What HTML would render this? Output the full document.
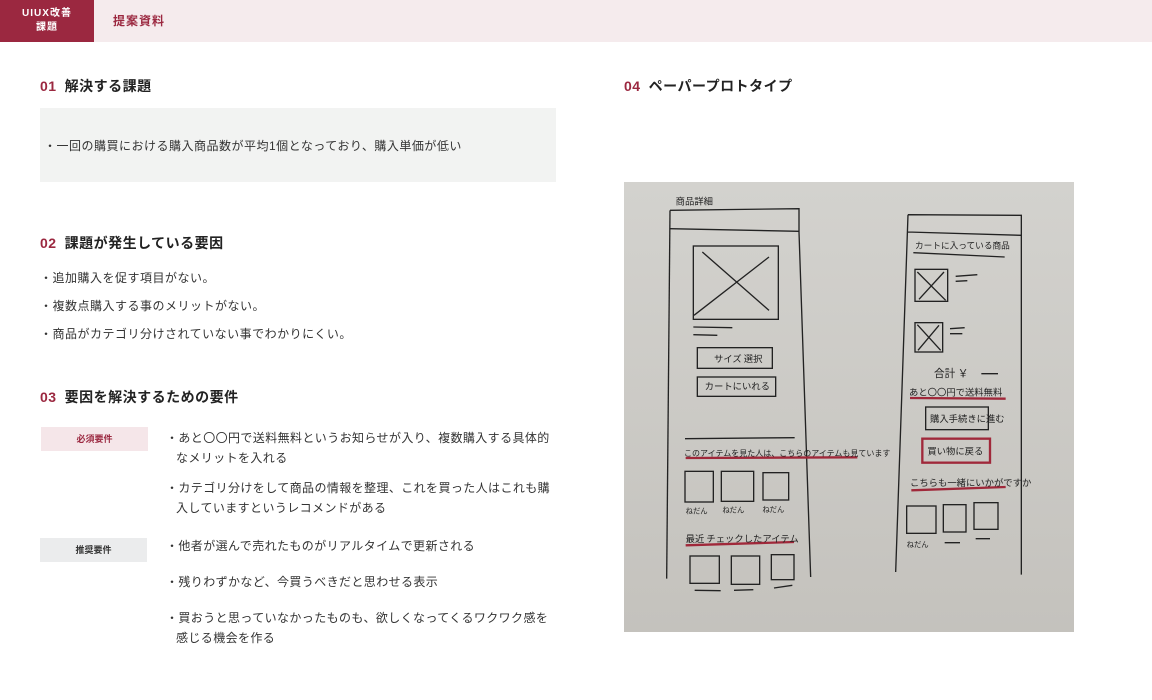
<!DOCTYPE html>
<html><head><meta charset="utf-8"><style>
*{margin:0;padding:0;box-sizing:border-box}
body{width:1152px;height:700px;background:#fff;font-family:"Liberation Sans","Noto Sans CJK JP",sans-serif;color:#333;position:relative;overflow:hidden}
.hdr{position:absolute;left:0;top:0;width:1152px;height:42px;background:#f5ebed}
.tag{position:absolute;left:0;top:0;width:94px;height:42px;background:#9b2840;color:#fff;font-size:10px;line-height:14px;text-align:center;padding-top:7px;letter-spacing:1px;font-weight:bold}
.ttl{position:absolute;left:113px;top:12px;font-size:12px;color:#9b2840;letter-spacing:1px;font-weight:bold}
h2{position:absolute;font-size:14px;font-weight:bold;color:#222;letter-spacing:.5px}
h2 b{color:#9b2840;margin-right:8px}
.p{position:absolute;font-size:12px;color:#333;letter-spacing:.5px}
.box{position:absolute;left:40px;top:108px;width:516px;height:74px;background:#f2f3f2}
.lab{position:absolute;font-size:9px;font-weight:bold;text-align:center;line-height:24px;height:24px}
.li{position:absolute;left:166px;font-size:12px;line-height:20px;color:#333;letter-spacing:.4px;width:385px;padding-left:10px;text-indent:-10px}
</style></head><body>
<div class="hdr"></div>
<div class="tag">UIUX改善<br>課題</div>
<div class="ttl">提案資料</div>

<h2 style="left:40px;top:76px"><b>01</b>解決する課題</h2>
<div class="box"></div>
<div class="p" style="left:44px;top:137px">・一回の購買における購入商品数が平均1個となっており、購入単価が低い</div>

<h2 style="left:40px;top:233px"><b>02</b>課題が発生している要因</h2>
<div class="p" style="left:40px;top:269px">・追加購入を促す項目がない。</div>
<div class="p" style="left:40px;top:297px">・複数点購入する事のメリットがない。</div>
<div class="p" style="left:40px;top:325px">・商品がカテゴリ分けされていない事でわかりにくい。</div>

<h2 style="left:40px;top:387px"><b>03</b>要因を解決するための要件</h2>
<div class="lab" style="left:41px;top:427px;width:107px;background:#f5e6e9;color:#9b2840">必須要件</div>
<div class="lab" style="left:40px;top:538px;width:107px;background:#ebeced;color:#333">推奨要件</div>
<div class="li" style="top:428px">・あと〇〇円で送料無料というお知らせが入り、複数購入する具体的なメリットを入れる</div>
<div class="li" style="top:478px">・カテゴリ分けをして商品の情報を整理、これを買った人はこれも購入していますというレコメンドがある</div>
<div class="li" style="top:536px">・他者が選んで売れたものがリアルタイムで更新される</div>
<div class="li" style="top:572px">・残りわずかなど、今買うべきだと思わせる表示</div>
<div class="li" style="top:608px">・買おうと思っていなかったものも、欲しくなってくるワクワク感を感じる機会を作る</div>

<h2 style="left:624px;top:76px"><b>04</b>ペーパープロトタイプ</h2>

<svg style="position:absolute;left:624px;top:182px" width="450" height="450" viewBox="0 0 1350 1350">
<defs><linearGradient id="g" x1="0" y1="0" x2="0" y2="1"><stop offset="0" stop-color="#d3d2ce"/><stop offset="1" stop-color="#c4c2bd"/></linearGradient></defs>
<rect width="1350" height="1350" fill="url(#g)"/>
<g fill="none" stroke="#222" stroke-width="4">
<path d="M138 85 L525 80 L525 150 L560 1185"/><path d="M138 85 L128 1190"/><path d="M138 140 L525 148"/>
<rect x="208" y="192" width="255" height="220"/><path d="M235 210 L435 385 M210 400 L435 225"/>
<path d="M208 435 L325 437 M208 458 L280 460"/>
<rect x="220" y="497" width="225" height="62"/><rect x="220" y="585" width="235" height="58"/>
<path d="M183 770 L512 767"/>
<rect x="183" y="868" width="85" height="92"/><rect x="292" y="868" width="97" height="90"/><rect x="417" y="872" width="77" height="82"/>
<rect x="198" y="1122" width="88" height="82"/><rect x="322" y="1122" width="85" height="85"/><rect x="442" y="1118" width="68" height="75"/>
<path d="M212 1225 L290 1226 M330 1225 L388 1223 M450 1218 L505 1210"/>
<path d="M852 98 L1192 100 L1192 1178 M852 98 L815 1170 M852 150 L1192 160"/>
<path d="M868 212 L1142 225"/>
<rect x="873" y="262" width="98" height="96"/><path d="M880 270 L965 355 M885 352 L960 270"/>
<rect x="873" y="422" width="83" height="88"/><path d="M880 428 L950 505 M882 505 L945 430"/>
<path d="M995 283 L1060 278 M995 298 L1030 296 M978 440 L1022 437 M978 455 L1015 455"/>
<path d="M1072 575 L1122 575"/>
<rect x="905" y="675" width="188" height="68"/>
<rect x="848" y="972" width="88" height="82"/><rect x="958" y="968" width="68" height="82"/><rect x="1050" y="962" width="72" height="80"/>
<path d="M962 1082 L1008 1082 M1055 1070 L1098 1070"/>
</g>
<g fill="none" stroke="#a0283a" stroke-width="7">
<path d="M185 828 L700 826"/><path d="M185 1090 L510 1080"/><path d="M858 648 L1145 650"/>
<rect x="895" y="770" width="203" height="72"/><path d="M862 925 L1145 915"/>
</g>
<g font-family="Noto Sans CJK JP,sans-serif" fill="#222" font-size="28">
<text x="155" y="68">商品詳細</text><text x="270" y="540">サイズ 選択</text><text x="242" y="622">カートにいれる</text>
<text x="180" y="822" font-size="24">このアイテムを見た人は、こちらのアイテムも見ています</text>
<text x="185" y="995" font-size="22">ねだん</text><text x="295" y="992" font-size="22">ねだん</text><text x="415" y="990" font-size="22">ねだん</text>
<text x="185" y="1080">最近 チェックしたアイテム</text>
<text x="873" y="200" font-size="26">カートに入っている商品</text>
<text x="930" y="585" font-size="32">合計 ￥</text>
<text x="855" y="640" font-size="28">あと〇〇円で送料無料</text>
<text x="918" y="720" font-size="28">購入手続きに進む</text>
<text x="910" y="818" font-size="28">買い物に戻る</text>
<text x="858" y="912" font-size="28">こちらも一緒にいかがですか</text>
<text x="848" y="1095" font-size="22">ねだん</text>
</g>
</svg>
</body></html>
